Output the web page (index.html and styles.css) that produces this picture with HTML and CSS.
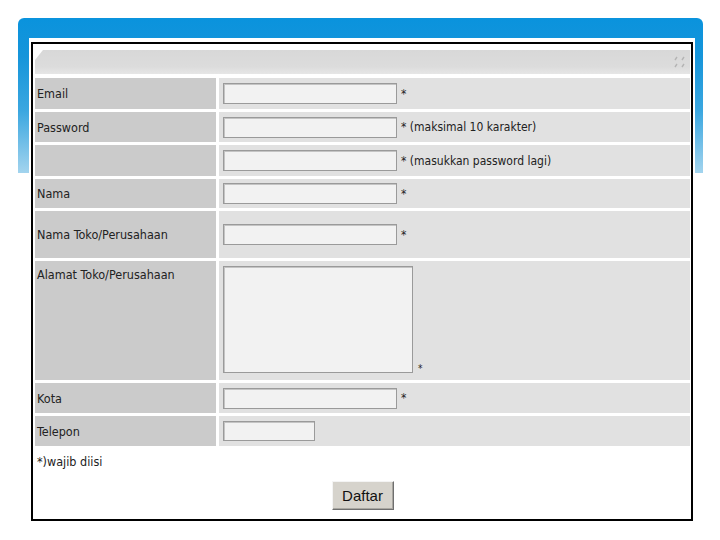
FILE: index.html
```html
<!DOCTYPE html>
<html lang="id">
<head>
    <meta charset="UTF-8">
    <meta name="viewport" content="width=device-width, initial-scale=1.0">
    <title>Daftar</title>
    <link rel="stylesheet" href="styles.css">
</head>
<body>
    <div class="slide">
        <div class="card">
            <div class="card-inner">
                <div class="panel-head">
                    <svg class="grip" width="12" height="14" viewBox="0 0 12 14">
                        <path d="M1 5 L3 2 M8 5 L10 2 M1 12 L3 9 M8 12 L10 9" stroke="#b4b4b4" stroke-width="1.4" fill="none"/>
                    </svg>
                </div>
                <form class="reg-form" onsubmit="return false;">
                    <div class="label">Email</div>
                    <div class="field"><input type="text" class="txt"><span class="req">*</span></div>

                    <div class="label">Password</div>
                    <div class="field"><input type="password" class="txt"><span class="req">* (maksimal 10 karakter)</span></div>

                    <div class="label"></div>
                    <div class="field"><input type="password" class="txt"><span class="req">* (masukkan password lagi)</span></div>

                    <div class="label">Nama</div>
                    <div class="field"><input type="text" class="txt"><span class="req">*</span></div>

                    <div class="label">Nama Toko/Perusahaan</div>
                    <div class="field"><input type="text" class="txt"><span class="req">*</span></div>

                    <div class="label label-top">Alamat Toko/Perusahaan</div>
                    <div class="field field-top"><textarea class="area"></textarea><span class="req req-low">*</span></div>

                    <div class="label">Kota</div>
                    <div class="field"><input type="text" class="txt"><span class="req">*</span></div>

                    <div class="label">Telepon</div>
                    <div class="field"><input type="text" class="txt short"></div>
                </form>
                <p class="note">*)wajib diisi</p>
                <div class="actions">
                    <button class="btn" type="button">Daftar</button>
                </div>
            </div>
        </div>
    </div>
</body>
</html>
```

FILE: styles.css
```css
body {
    margin: 0;
    background: #fff;
    font-family: "DejaVu Sans", Verdana, sans-serif;
    font-stretch: condensed;
    color: #222;
}
.slide {
    margin: 18px 0 0 18px;
    width: 685px;
    box-sizing: border-box;
    padding: 20px 8px 0 11px;
    border-radius: 6px 6px 0 0;
    background: linear-gradient(to bottom, #0a93dd 0, #1695da 25%, #3ba7e0 60%, #a3d4ee 100%) top left / 100% 155px no-repeat;
}
.card {
    background: #fff;
    padding: 4px 2px 2px;
}
.card-inner {
    border: 2px solid #000;
    padding: 6px 1px 9px 2px;
}
.panel-head {
    height: 24px;
    display: flex;
    justify-content: flex-end;
    align-items: center;
    padding-right: 4px;
    background: linear-gradient(to bottom, #d8d8d8, #dcdcdc 70%, #e6e6e6);
    clip-path: polygon(8px 0, 100% 0, 100% 100%, 0 100%, 0 10px);
}
.reg-form {
    margin: 4px 0 0;
    display: grid;
    grid-template-columns: 181px 1fr;
    grid-template-rows: 31px 30px 31px 29px 47px 119px 30px 30px;
    gap: 3px;
}
.label {
    background: #cbcbcb;
    font-size: 12.5px;
    padding-left: 2px;
    display: flex;
    align-items: center;
}
.label-top {
    align-items: flex-start;
    padding-top: 6px;
}
.field {
    background: #e1e1e1;
    padding-left: 4px;
    display: flex;
    align-items: center;
    gap: 4px;
    font-size: 12px;
}
.field-top {
    align-items: flex-start;
    padding-top: 5px;
}
.req {
    white-space: pre;
}
.field-top .req-low {
    align-self: flex-end;
    margin: 0 0 6px 1px;
    font-size: 10px;
}
.txt {
    width: 174px;
    height: 21px;
    box-sizing: border-box;
    margin: 0;
    background: #f2f2f2;
    border: 1px solid #9a9a9a;
    box-shadow: inset 1px 1px 0 #c4c4c4;
}
.txt.short {
    width: 92px;
    height: 20px;
}
.area {
    width: 190px;
    height: 107px;
    box-sizing: border-box;
    margin: 0;
    resize: none;
    background: #f2f2f2;
    border: 1px solid #9a9a9a;
    box-shadow: inset 1px 1px 0 #c4c4c4;
}
.note {
    margin: 8px 0 0 2px;
    font-size: 12.5px;
    line-height: 16px;
}
.actions {
    margin-top: 11px;
    display: flex;
    justify-content: center;
}
.btn {
    width: 62px;
    height: 29px;
    padding: 0;
    font-family: "Liberation Sans", Arial, sans-serif;
    font-size: 15px;
    color: #111;
    background: #d6d3cc;
    border: 1px solid;
    border-color: #f4f4f4 #6f6f6f #6f6f6f #f4f4f4;
    box-shadow: inset -1px -1px 0 #a9a7a1;
}
```
